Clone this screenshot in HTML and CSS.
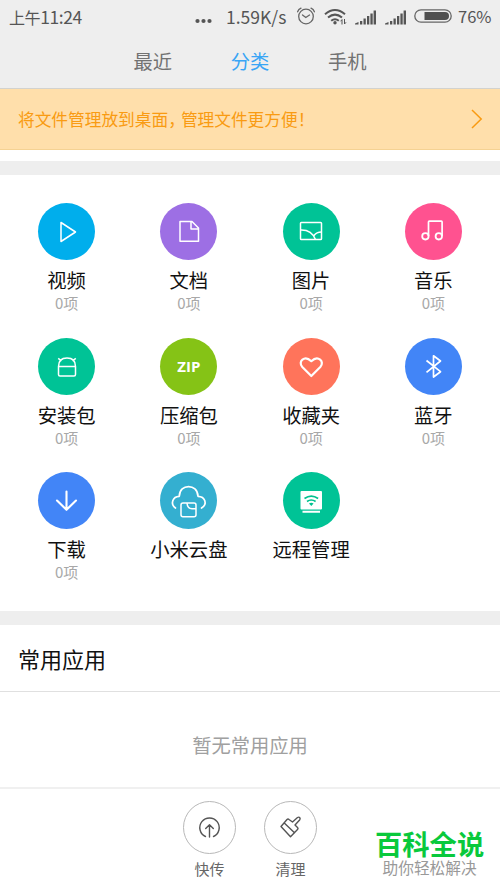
FILE: index.html
```
<!DOCTYPE html>
<html lang="zh-CN">
<head>
<meta charset="utf-8">
<title>文件管理</title>
<link rel="stylesheet" href="styles.css">
</head>
<body>
<div class="screen">
  <header class="header">
    <div class="status">
      <span class="clock"><span class="ampm">上午</span>11:24</span>
      <svg class="dots" width="18" height="6" viewBox="0 0 18 6" fill="#555"><circle cx="3.500" cy="3" r="2.100"/><circle cx="9.500" cy="3" r="2.100"/><circle cx="15.500" cy="3" r="2.100"/></svg>
      <span class="speed">1.59K/s</span>
      <svg class="alarm" width="20" height="18" viewBox="0 0 20 18" fill="none" stroke="#666" stroke-width="1.3" stroke-linecap="round"><circle cx="10" cy="9.5" r="7.3"/><path d="M6.5 8l3.3 2.5L13.5 8M1.6 4.8Q2.5 2.2 5 1.2M18.4 4.8Q17.500 2.200 15 1.200"/></svg>
      <svg class="wifi" width="24" height="18" viewBox="0 0 24 18" fill="none" stroke="#555" stroke-width="2"><path d="M1 6.200Q11 -2.200 21 6.200M4 9.600Q11 3.600 18 9.600M7.200 12.800Q11 9.600 14.800 12.800"/><circle cx="11" cy="14.700" r="1.700" fill="#555" stroke="none"/><path stroke-width="1" d="M18 11.500v5M16.500 13.300l1.500-1.600M20.500 11v5M22 14.300l-1.500 1.700"/></svg>
      <svg class="signal" width="22" height="16" viewBox="0 0 22 16" fill="#555"><path d="M0 15.500V14.500L3.500 13v2.500zM5 12h2.300v3.500H5zM8.500 9.500h2.300v6H8.500zM12 7h2.300v8.500H12zM15.400 4.500h2.300v11h-2.300zM18.600 1.500H21v14h-2.400z"/></svg>
      <svg class="signal second" width="22" height="16" viewBox="0 0 22 16" fill="#555"><path d="M0 15.500V14.500L3.500 13v2.500zM5 12h2.300v3.500H5zM8.500 9.500h2.300v6H8.500zM12 7h2.300v8.500H12zM15.400 4.500h2.300v11h-2.300zM18.600 1.500H21v14h-2.400z"/></svg>
      <svg class="battery" width="38" height="14" viewBox="0 0 38 14"><rect x=".8" y=".8" width="36.400" height="12.400" rx="6.200" fill="none" stroke="#666" stroke-width="1.300"/><path d="M10.500 3H31a4 4 0 0 1 0 8H10.500z" fill="#505050"/></svg>
      <span class="percent">76%</span>
    </div>
    <nav class="tabs"><span>最近</span><span class="active">分类</span><span>手机</span></nav>
  </header>

  <div class="banner">
    <span>将文件管理放到桌面<span class="comma">，</span>管理文件更方便！</span>
    <svg width="12" height="20" viewBox="0 0 12 20" fill="none" stroke="#f99b12" stroke-width="1.500"><path d="M1 1l9.200 9L1 19"/></svg>
  </div>

  <main class="grid">
    <div class="item"><div class="disc video"><svg viewBox="0 0 57 57"><path d="M23 19.500v19L37.500 29z"/></svg></div><b>视频</b><small>0项</small></div>
    <div class="item"><div class="disc doc"><svg viewBox="0 0 57 57"><path d="M20 18.500h12l6.500 6.500v13.300H20zM31 18.500V26h7.500"/></svg></div><b>文档</b><small>0项</small></div>
    <div class="item"><div class="disc green"><svg viewBox="0 0 57 57"><rect x="17.500" y="19.500" width="21" height="17" rx=".8"/><path d="M17.500 27Q28.500 26.500 32.500 36.500M31 32.500q2.500-3.500 7.500-3.500"/></svg></div><b>图片</b><small>0项</small></div>
    <div class="item"><div class="disc music"><svg viewBox="0 0 57 57"><path stroke-width="1.700" d="M23.500 33V19q0-.8.8-.8h12q.8 0 .8.800V33"/><circle cx="20.400" cy="33.300" r="3.200" stroke-width="1.800"/><circle cx="33.800" cy="33.300" r="3.200" stroke-width="1.800"/></svg></div><b>音乐</b><small>0项</small></div>

    <div class="item"><div class="disc green"><svg viewBox="0 0 57 57"><path d="M20.500 28.500q0-8.500 8.500-8.500t8.500 8.500v8q0 1.500-1.500 1.500H22q-1.500 0-1.500-1.500zM20.500 28.500h17M20.200 20.300l3.300 2.500M37.800 20.300l-3.300 2.500"/></svg></div><b>安装包</b><small>0项</small></div>
    <div class="item"><div class="disc zip">ZIP</div><b>压缩包</b><small>0项</small></div>
    <div class="item"><div class="disc fav"><svg viewBox="0 0 57 57"><path stroke-width="2.200" d="M28.300 38L19.300 29C14.500 23.500 21.500 16.500 28.300 23.200C35.100 16.500 42.100 23.500 37.300 29z"/></svg></div><b>收藏夹</b><small>0项</small></div>
    <div class="item"><div class="disc blue"><svg viewBox="0 0 57 57"><path stroke-width="1.700" d="M21.500 22.500l14 11.200-7 5.300V17.800l7 5.200-14 11.300"/></svg></div><b>蓝牙</b><small>0项</small></div>

    <div class="item"><div class="disc blue"><svg viewBox="0 0 57 57"><path stroke-width="2.100" d="M28.500 19.500V37.500M19 28.500l9.500 9.300 9.500-9.300" stroke-linecap="round"/></svg></div><b>下载</b><small>0项</small></div>
    <div class="item"><div class="disc cloud"><svg viewBox="0 0 57 57"><path stroke-width="1.700" stroke-linecap="round" d="M15.500 36C10 32 12.500 24.500 19.300 24.300C19.500 11.300 37.500 11.300 38 24.300C45 24.500 48 32 41.500 36"/><rect x="21" y="31" width="15" height="13.800" rx="2"/><path d="M27 31q.4 5.600 5 5.800h4"/></svg></div><b>小米云盘</b></div>
    <div class="item"><div class="disc green"><svg viewBox="0 0 57 57"><path fill="#fff" stroke="none" d="M18.500 19H38q1 0 1 1v16.500q0 1-1 1H18.500q-1 0-1-1V20q0-1 1-1zM19.500 38.700H37v2H19.500z"/><path stroke="#00c18f" stroke-width="1.700" d="M21.500 26.500q6.800-4.700 13.600 0M24 29.500q4.300-3 8.600 0"/><path fill="#00c18f" stroke="none" d="M26 31.500q2.300-1.400 4.600 0l-2.300 2.500z"/></svg></div><b>远程管理</b></div>
  </main>

  <section class="apps">
    <h2>常用应用</h2>
    <p>暂无常用应用</p>
  </section>

  <footer class="footer">
    <div class="action"><div class="ring"><svg viewBox="0 0 53 53"><path d="M22.500 35.500A9.700 9.700 0 1 1 30.500 35.500M26.500 36V23.800M22.700 27.600l3.800-3.800 3.800 3.800"/></svg></div><span>快传</span></div>
    <div class="action"><div class="ring"><svg viewBox="0 0 53 53"><path d="M17 25.500L23 18.500q1-1 2 0l3.500 2.500 5-4.500q1.500-.8 2.300.2t-.2 2.300l-4.600 5 2.500 2.500q1 1 0 2L26.500 35.700zM20 21.800l10.500 10"/></svg></div><span>清理</span></div>
    <div class="brand"><strong>百科全说</strong><span>助你轻松解决</span></div>
  </footer>
</div>
</body>
</html>
```
FILE: styles.css
```
* { box-sizing: border-box; }
body {
  margin: 0;
  background: #fff;
  font-family: "Noto Sans CJK SC", sans-serif;
}
.screen { width: 500px; height: 889px; overflow: hidden; display: flex; flex-direction: column; }
.header { height: 89px; flex: none; background: #eee; border-bottom: 1px solid #d2d2ce; }
.status { display: flex; align-items: center; height: 35px; padding-left: 9px; color: #555; font-size: 17.5px; line-height: 33px; white-space: nowrap; }
.status svg { flex: none; }
.status > span { margin-top: -2px; }
.clock { width: 185px; letter-spacing: -.4px; }
.ampm { font-size: 16px; letter-spacing: -.4px; }
.dots { margin-top: 7px; }
.speed { width: 70px; margin-left: 14px; }
.alarm { margin-top: -4px; }
.wifi { margin-left: 8px; margin-top: -2px; }
.signal { margin-left: 7px; margin-top: -2px; }
.signal.second { margin-left: 8px; }
.battery { margin-left: 7px; margin-top: -3px; }
.percent { margin-left: 6px; font-size: 16.5px; }
.tabs { display: grid; grid-template-columns: repeat(3, 97.3px); justify-content: center; text-align: center; font-size: 19.3px; line-height: 53px; color: #727272; }
.tabs .active { color: #39a5f5; }
.banner { flex: none; height: 61px; background: #ffdfab; border-bottom: 1px solid #f5d293; display: flex; align-items: center; justify-content: space-between; padding: 0 17px 0 18px; font-size: 16.7px; color: #f99b12; }
.comma { letter-spacing: -4px; }
.grid { flex: none; height: 464px; margin-top: 11px; border: solid #eee; border-width: 14px 0; padding: 28px 5.5px 0; display: grid; grid-template-columns: repeat(4, 1fr); grid-auto-rows: 134.7px; }
.item { display: flex; flex-direction: column; align-items: center; }
.disc { width: 57px; height: 57px; border-radius: 50%; }
.disc svg { display: block; width: 57px; height: 57px; fill: none; stroke: #fff; stroke-width: 1.5; stroke-linejoin: round; }
.video { background: #00aeec; }
.doc { background: #9d6fe4; }
.green { background: #00c396; }
.music { background: #ff5290; }
.zip { background: #85c316; color: #fff; font: 700 15px/56px "Open Sans", sans-serif; text-align: center; }
.fav { background: #ff745b; }
.blue { background: #4285f7; }
.cloud { background: #34afd0; }
.item b { margin-top: 6px; font-weight: 400; font-size: 19.3px; line-height: 28px; color: #111; }
.item small { font-size: 15px; line-height: 18px; color: #a8a8a8; }
.apps { flex: none; height: 164px; border-bottom: 2px solid #f0f0f0; }
.apps h2 { margin: 0; height: 67px; padding-left: 18px; border-bottom: 1px solid #e0e0e0; font-size: 22px; line-height: 66px; font-weight: 400; color: #111; }
.apps p { margin: 0; text-align: center; font-size: 19.3px; line-height: 106px; color: #a0a0a0; }
.footer { flex: 1; display: flex; padding: 12px 0 0 183px; }
.action { width: 53px; margin-right: 28px; display: flex; flex-direction: column; align-items: center; color: #666; font-size: 15px; }
.action span { line-height: 22px; margin-top: 4px; }
.ring { width: 53px; height: 53px; border: 1px solid #b8b8b8; border-radius: 50%; }
.ring svg { display: block; margin: -1px; width: 53px; height: 53px; fill: none; stroke: #555; stroke-width: 1.4; stroke-linejoin: round; stroke-linecap: round; }
.brand { margin-left: 30px; padding-top: 27px; display: flex; flex-direction: column; align-items: center; white-space: nowrap; }
.brand strong { font-size: 27.3px; line-height: 31px; font-weight: 700; color: #09c93c; }
.brand span { font-size: 15.7px; line-height: 18px; color: #999; }
```
